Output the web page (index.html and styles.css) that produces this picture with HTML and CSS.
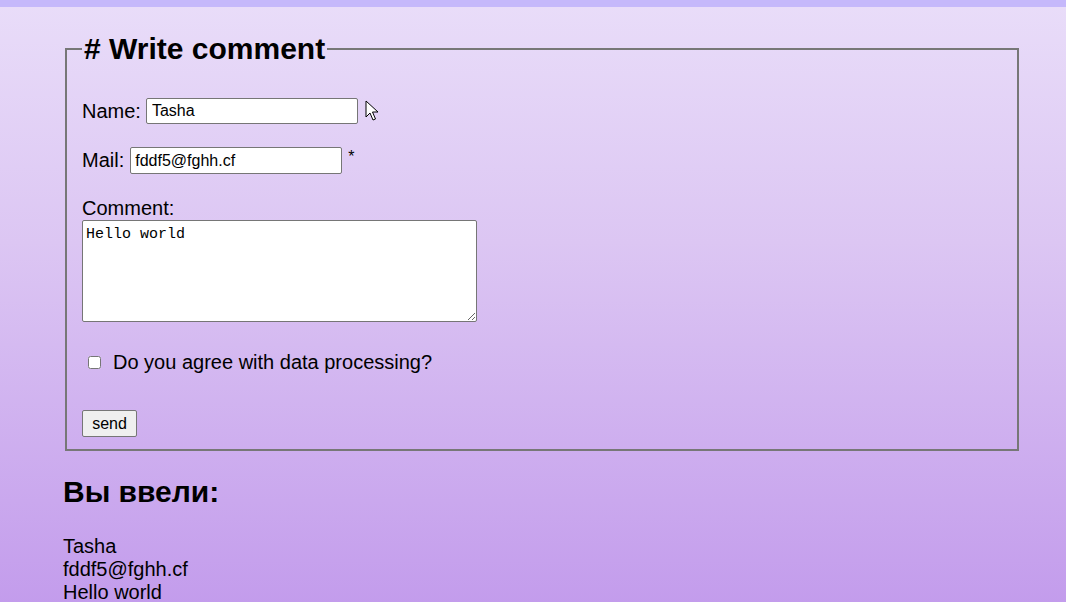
FILE: index.html
```html
<!DOCTYPE html>
<html lang="en">
<head>
<meta charset="utf-8">
<title>Write comment</title>
<link rel="stylesheet" href="styles.css">
</head>
<body>
<main class="page">
  <form class="comment-form">
    <fieldset class="box">
      <legend class="box-title"># Write comment</legend>
      <div class="row row-name">
        <label for="name">Name:</label><input class="field" id="name" type="text" value="Tasha">
        <svg class="cursor" width="14" height="22" viewBox="0 0 14 22" aria-hidden="true">
          <path d="M1 1 L1 17 L5 13 L8 20 L10.5 19 L7.5 12 L13 12 Z" fill="#fff" stroke="#000" stroke-width="1" stroke-linejoin="round"/>
        </svg>
      </div>
      <div class="row row-mail">
        <label for="mail">Mail:</label><input class="field" id="mail" type="text" value="fddf5@fghh.cf"><span class="req">*</span>
      </div>
      <div class="row-label"><label for="comment">Comment:</label></div>
      <textarea class="area" id="comment">Hello world</textarea>
      <div class="row row-check">
        <input class="check" type="checkbox" id="agree"><label for="agree">Do you agree with data processing?</label>
      </div>
      <div class="row-btn">
        <button class="btn" type="button">send</button>
      </div>
    </fieldset>
  </form>
  <h2 class="result-title">Вы ввели:</h2>
  <div class="result">
    <div>Tasha</div>
    <div>fddf5@fghh.cf</div>
    <div>Hello world</div>
  </div>
</main>
</body>
</html>
```

FILE: styles.css
```css
html, body {
  margin: 0;
  padding: 0;
}
body {
  min-height: 100vh;
  border-top: 7px solid #c5b8fb;
  box-sizing: border-box;
  background: linear-gradient(180deg, #e9ddf9 0%, #dcc6f3 40%, #c39cec 100%);
  font-family: "Liberation Sans", Arial, sans-serif;
  font-size: 20px;
  color: #000;
  overflow: hidden;
}
.page {
  width: 958px;
  padding: 25px 0 0 63px;
}
.comment-form {
  margin: 0;
}
.box {
  margin: 0 2px;
  border: 2px solid #777;
  padding: 0 15px 12px;
  min-width: 0;
}
.box-title {
  font-size: 30px;
  font-weight: bold;
  padding: 0 2px;
  line-height: 34px;
}
.row {
  position: relative;
  display: flex;
  align-items: center;
  line-height: 23px;
  white-space: pre;
}
.row-name {
  margin-top: 32px;
}
.row-mail {
  margin-top: 23px;
}
.field {
  box-sizing: border-box;
  width: 212px;
  height: 26px;
  margin: 0 0 0 5px;
  padding: 0 5px;
  border: 1px solid #767676;
  border-radius: 2px;
  background: #fff;
  font-family: "Liberation Sans", Arial, sans-serif;
  font-size: 16px;
  color: #000;
}
.row-mail .field {
  height: 27px;
  margin-left: 6px;
  padding: 0 4px;
}
.req {
  align-self: flex-start;
  margin-left: 6px;
  font-size: 16px;
  line-height: 18px;
  margin-top: 1px;
}
.cursor {
  position: absolute;
  left: 283px;
  top: 2px;
}
.row-label {
  margin-top: 23px;
  line-height: 23px;
}
.area {
  display: block;
  box-sizing: border-box;
  width: 395px;
  height: 102px;
  margin: 0;
  padding: 5px 3px 3px;
  border: 1px solid #767676;
  border-radius: 2px;
  background: #fff;
  font-family: "Liberation Mono", "DejaVu Sans Mono", monospace;
  font-size: 15px;
  color: #000;
  resize: both;
}
.row-check {
  margin-top: 29px;
}
.check {
  width: 13px;
  height: 13px;
  margin: 0 12px 0 6px;
}
.row-btn {
  margin-top: 36px;
  line-height: 0;
}
.btn {
  box-sizing: border-box;
  height: 27px;
  width: 55px;
  margin: 0;
  padding: 0;
  border: 1px solid #767676;
  border-radius: 2px;
  background: #efefef;
  font-family: "Liberation Sans", Arial, sans-serif;
  font-size: 16px;
  color: #000;
}
.result-title {
  margin: 24px 0 0;
  font-size: 30px;
  line-height: 34px;
  font-weight: bold;
}
.result {
  margin-top: 26px;
  line-height: 23px;
}
```
